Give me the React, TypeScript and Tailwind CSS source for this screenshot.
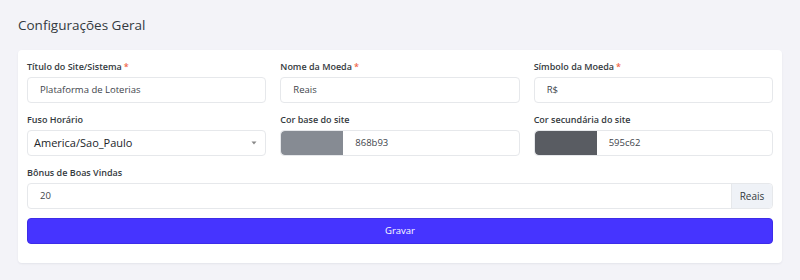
import React from 'react';

const font = { fontFamily: '"Open Sans", "Noto Sans", sans-serif' };

const Label = ({ children, required }: { children: React.ReactNode; required?: boolean }) => (
  <label className="block h-3 leading-3 mb-1 text-[9px] font-semibold text-[#343a40]">
    {children}
    {required && <span className="text-[#f06548] ml-0.5">*</span>}
  </label>
);

const TextField = ({ value }: { value: string }) => (
  <div className="h-[26px] flex items-center px-3 border border-[#e6e8eb] rounded bg-white text-[9.5px] text-[#3e444b]">
    {value}
  </div>
);

const ColorField = ({ color, value }: { color: string; value: string }) => (
  <div className="h-[26px] flex border border-[#e6e8eb] rounded bg-white overflow-hidden">
    <div className="w-[62px] h-full rounded-l" style={{ backgroundColor: color }} />
    <div className="flex-1 flex items-center pl-3 text-[9.5px] text-[#3e444b]">{value}</div>
  </div>
);

export default function App() {
  return (
    <div className="w-[800px] h-[280px] bg-[#f3f3f8] pt-[17px] px-[18px]" style={font}>
      <h4 className="text-[13.5px] leading-4 font-medium text-[#343a40]">Configurações Geral</h4>
      <div className="mt-[17px] bg-white rounded shadow-[0_1px_2px_rgba(56,65,74,0.08)] px-[9px] pt-[11px] pb-[19px]">
        <div className="grid grid-cols-3 gap-x-[14px] gap-y-[11px]">
          <div>
            <Label required>Título do Site/Sistema</Label>
            <TextField value="Plataforma de Loterias" />
          </div>
          <div>
            <Label required>Nome da Moeda</Label>
            <TextField value="Reais" />
          </div>
          <div>
            <Label required>Símbolo da Moeda</Label>
            <TextField value="R$" />
          </div>
          <div>
            <Label>Fuso Horário</Label>
            <div className="h-[26px] flex items-center justify-between pl-[6px] pr-2 border border-[#e6e8eb] rounded bg-white text-[11px] text-[#212529]">
              <span>America/Sao_Paulo</span>
              <svg width="6" height="4" viewBox="0 0 6 4">
                <path d="M0.5 0.5 L3 3.5 L5.5 0.5 Z" fill="#888" />
              </svg>
            </div>
          </div>
          <div>
            <Label>Cor base do site</Label>
            <ColorField color="#868b93" value="868b93" />
          </div>
          <div>
            <Label>Cor secundária do site</Label>
            <ColorField color="#595c62" value="595c62" />
          </div>
          <div className="col-span-3">
            <Label>Bônus de Boas Vindas</Label>
            <div className="h-[26px] flex border border-[#e6e8eb] rounded bg-white">
              <div className="flex-1 flex items-center px-3 text-[9.5px] text-[#3e444b]">20</div>
              <div className="w-[41px] flex items-center justify-center bg-[#eff2f7] border-l border-[#e6e8eb] rounded-r text-[10px] font-medium text-[#343a40]">
                Reais
              </div>
            </div>
          </div>
        </div>
        <button className="mt-[9px] w-full h-[26px] rounded bg-[#4634ff] border border-[#3d2ce8] text-white text-[9.5px] font-medium">
          Gravar
        </button>
      </div>
    </div>
  );
}
